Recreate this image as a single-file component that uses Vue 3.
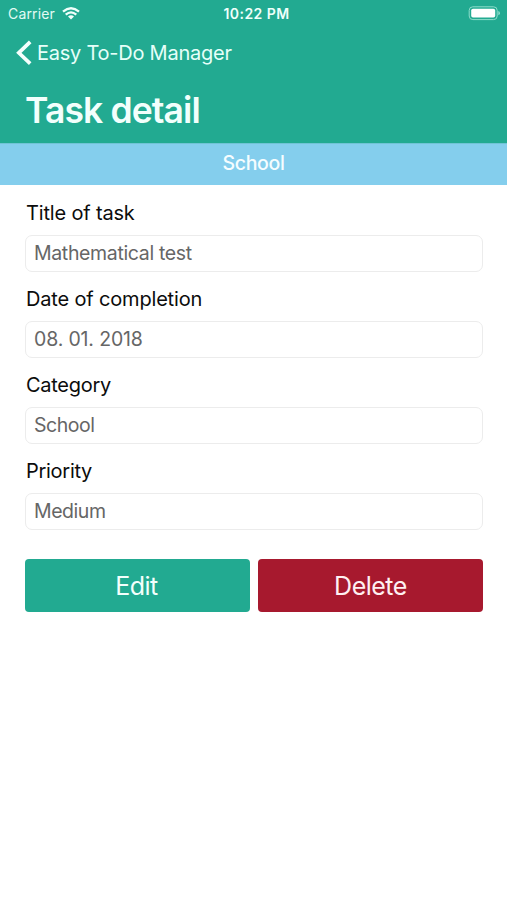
<script setup>
const fields = [
  { id: 'title', label: 'Title of task', value: 'Mathematical test' },
  { id: 'date', label: 'Date of completion', value: '08. 01. 2018' },
  { id: 'category', label: 'Category', value: 'School' },
  { id: 'priority', label: 'Priority', value: 'Medium' },
]
</script>

<template>
  <main class="screen">
    <header class="header">
      <div class="status">
        <div class="carrier">
          <span>Carrier</span>
          <svg class="wifi" width="18" height="13" viewBox="0 0 18 13" aria-hidden="true">
            <path d="M1 4.6Q9-2 17 4.6M3.7 7.6Q9 3.2 14.3 7.6" />
            <path class="dot" d="M6 9.6Q9 7 12 9.6L9 12.6Z" />
          </svg>
        </div>
        <span class="time">10:22 PM</span>
        <svg class="battery" width="33" height="15" viewBox="0 0 33 15" aria-hidden="true">
          <rect class="shell" x="1.2" y=".8" width="28" height="12.8" rx="3.6" />
          <rect class="charge" x="3.2" y="2.8" width="24" height="8.8" rx="1.8" />
          <path class="cap" d="M30.3 5.1Q32 5.6 32 7.2Q32 8.8 30.3 9.3Z" />
        </svg>
      </div>
      <div class="back">
        <svg width="17" height="28" viewBox="0 0 17 28" aria-hidden="true">
          <path d="M15.2 2.9L3.8 13.8L15.2 24.7" />
        </svg>
        <span>Easy To-Do Manager</span>
      </div>
      <h1 class="heading">Task detail</h1>
    </header>
    <div class="banner">School</div>
    <section class="form">
      <div v-for="field in fields" :key="field.id" class="field">
        <div class="label" :class="field.id">{{ field.label }}</div>
        <div class="value" :class="field.id">{{ field.value }}</div>
      </div>
      <div class="actions">
        <button class="edit">Edit</button>
        <button class="delete">Delete</button>
      </div>
    </section>
  </main>
</template>

<style>
body { background: #fff; }
</style>

<style scoped>
.screen {
  height: 900px;
  background: #fff;
  color: #0c0c0c;
  font-family: Inter, "Liberation Sans", sans-serif;
  font-size: 20px;
  white-space: nowrap;
}
.header { height: 143px; background: #22aa91; color: #fff; box-sizing: border-box; }
.status {
  display: grid;
  grid-template-columns: 1fr auto 1fr;
  height: 27px;
  align-items: center;
  padding: 0 6px 0 8px;
}
.carrier { display: flex; align-items: center; gap: 7px; font-size: 14px; letter-spacing: .15px; color: #e2fbf4; }
.wifi { fill: none; stroke: #f0fffb; stroke-width: 2.3; }
.wifi .dot { fill: #f0fffb; stroke: none; }
.time { padding-left: 4px; font-size: 14px; font-weight: 600; letter-spacing: .45px; color: #effffb; }
.battery { justify-self: end; }
.shell { fill: none; stroke: #8edccb; stroke-width: 1; }
.charge { fill: #fff; }
.cap { fill: #8edccb; }
.back { display: flex; align-items: center; height: 51px; padding-left: 15px; gap: 5px; color: #e6fff9; letter-spacing: -.24px; }
.back svg { fill: none; stroke: #f5fffd; stroke-width: 3.7; }
.heading {
  margin: 0;
  height: 65px;
  line-height: 66px;
  padding-left: 25px;
  font-size: 35.5px;
  font-weight: 600;
  letter-spacing: -.9px;
  color: #f2fffc;
}
.banner {
  height: 42px;
  box-sizing: border-box;
  border-top: 1px solid #70c3d5;
  line-height: 39px;
  background: #84ceed;
  color: #f5fdff;
  font-size: 19.5px;
  font-weight: 500;
  letter-spacing: -.35px;
  text-align: center;
}
.form { padding: 14px 24px 0 25px; }
.field { height: 86px; }
.label { height: 36px; line-height: 28px; padding-left: 1px; letter-spacing: -.17px; }
.label.category, .label.priority { letter-spacing: -.28px; }
.value {
  height: 37px;
  box-sizing: border-box;
  border: 1px solid #ececec;
  border-radius: 7px;
  padding-left: 8px;
  line-height: 35px;
  font-size: 19.5px;
  letter-spacing: -.35px;
  color: #666;
}
.value.date { letter-spacing: -.15px; }
.value.category, .value.priority { letter-spacing: -.45px; }
.actions { display: grid; grid-template-columns: 225px 225px; gap: 8px; padding-top: 16px; }
button {
  height: 53px;
  border: 0;
  border-radius: 4px;
  padding: 1px 2px 0 0;
  font: inherit;
  font-size: 25px;
  letter-spacing: -.5px;
  color: #f3fffc;
}
.edit { background: #22aa91; }
.delete { padding-right: 0; background: #a7192e; color: #fff0f2; }
</style>
